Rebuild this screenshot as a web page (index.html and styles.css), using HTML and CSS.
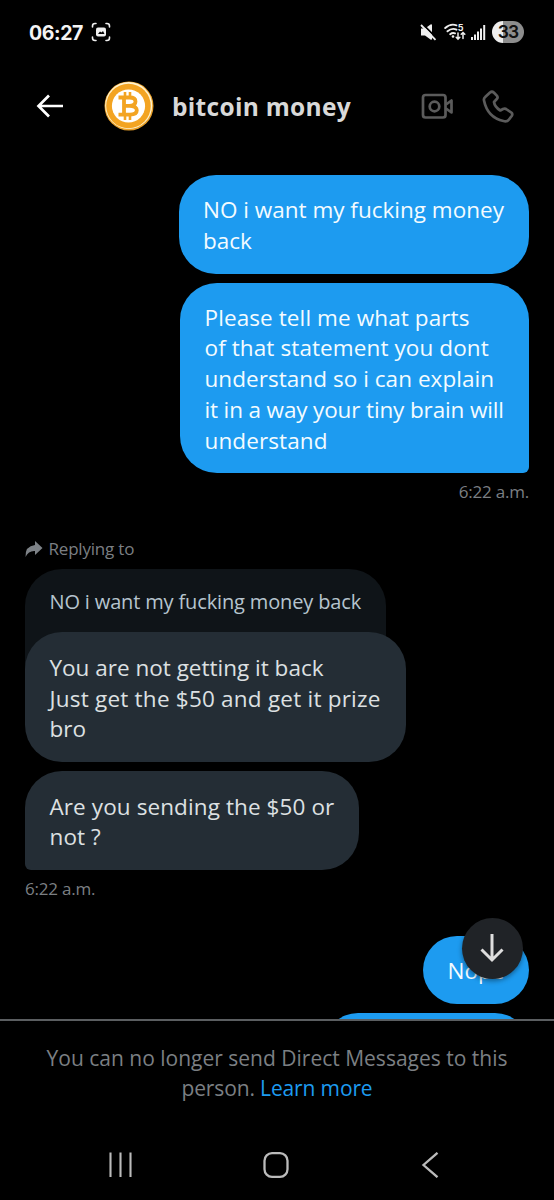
FILE: index.html
```html
<!DOCTYPE html>
<html lang="en">
<head>
<meta charset="utf-8">
<title>bitcoin money</title>
<link rel="stylesheet" href="styles.css">
</head>
<body>
<div class="phone">
  <div class="status">
    <span class="clock">06:27</span>
    <svg class="shot" width="20" height="20" viewBox="0 0 20 20" fill="none" stroke="#eee" stroke-width="1.6" stroke-linecap="round"><path d="M1.500 5V4Q1.500 1.500 4 1.500H5M15 1.500h1Q18.500 1.500 18.500 4V5M18.500 15v1Q18.500 18.500 16 18.500H15M5 18.500H4Q1.500 18.500 1.500 16V15"/><rect x="5" y="5.500" width="10" height="9" rx="2" fill="#eee" stroke="none"/><path d="M7 12l2-2.500 1.500 1 1.500-1.500 1.500 3z" fill="#000" stroke="none"/></svg>
    <svg class="mute" width="17" height="18" viewBox="0 0 17 18"><path d="M1 5.500H5L10.500 1.500Q12 .8 12 2.300V15.700Q12 17.200 10.500 16.500L5 12.500H1z" fill="#eee"/><path d="M2.500 .8L17 15.600" stroke="#000" stroke-width="1.800"/><path d="M1 2L15.500 16.800" stroke="#eee" stroke-width="1.800"/></svg>
    <svg class="wifi" width="23" height="18" viewBox="0 0 23 18" fill="none" stroke="#eee" stroke-width="1.900" stroke-linecap="round"><path d="M1.200 5Q6.500 .2 12.500 2.300M3.500 8.300Q8 4.500 12.500 6.700M6.200 11.200Q8.500 9.300 11 10.300"/><circle cx="9" cy="13.500" r="1.300" fill="#eee" stroke="none"/><path d="M14 10v6M12.200 14.300l1.800 1.800 1.800-1.800M19 15.500v-6M17.200 11.300l1.800-1.800 1.800 1.800" stroke-width="1.500"/><text x="13.700" y="7.800" class="wifi-gen">5</text></svg>
    <svg class="signal" width="15" height="17" viewBox="0 0 15 17" fill="#eee"><rect x="0" y="13" width="2" height="3"/><rect x="3" y="10.500" width="2" height="5.500"/><rect x="6" y="7.500" width="2" height="8.500"/><rect x="9" y="4.500" width="2" height="11.500"/><rect x="12.200" y="1" width="2" height="15"/></svg>
    <span class="battery">33</span>
  </div>

  <div class="header">
    <svg class="back" width="28" height="24" viewBox="0 0 28 24" fill="none" stroke="#fff" stroke-width="2.700"><path d="M27 12H2.500M13 1.500L2.500 12 13 22.500"/></svg>
    <svg class="avatar" width="50" height="50" viewBox="0 0 50 50"><circle cx="25" cy="25" r="24.500" fill="#e9a02a"/><circle cx="24.700" cy="24.500" r="23.500" fill="#fff3cf"/><circle cx="24.500" cy="25" r="22.300" fill="#f3a422"/><circle cx="24.500" cy="25" r="16.600" fill="#fff"/><g fill="none" stroke="#f3a422"><path d="M14.500 16.500H25.500Q31.500 16.500 31.500 20.500T25.500 24.800H20M25.500 24.800Q32.800 25 32.800 29.300T26 33.700H14.500M20 16V34" stroke-width="3.800"/><path d="M21 11v5M26 11v5M21 34v5M26 34v5" stroke-width="2.600"/></g></svg>
    <h1 class="name">bitcoin money</h1>
    <svg class="video" width="33" height="27" viewBox="0 0 33 27" fill="none" stroke="#5b5b5b" stroke-width="2.700" stroke-linejoin="round"><rect x="2" y="2" width="22.500" height="22.500" rx="2.500"/><circle cx="13.500" cy="13.500" r="4.800"/><path d="M25 11.500L30.500 7.500V19.500L25 15.500"/></svg>
    <svg class="call" width="32" height="33" viewBox="0 0 32 33" fill="none" stroke="#5b5b5b" stroke-width="2.700" stroke-linejoin="round"><path d="M8 2.500Q10 1 11.800 2.500L14.800 5.700Q16.300 7.500 14.800 9L12 12Q12.600 16.800 18.300 20.500L21 19Q23 18 24.800 19.500L29.300 22.500Q31 24 29.700 26L27 29.500Q25 32 21.500 31Q5.500 27.500 2 10.500Q1.500 8.500 3.200 7z"/></svg>
  </div>

  <div class="thread">
    <div class="bubble mine b1">NO i want my fucking money<br>back</div>
    <div class="bubble mine tail-right b2"><span class="loose">Please tell me what parts</span><br><span class="loose">of that statement you dont</span><br><span class="slight">understand so i can explain</span><br><span class="tight">it in a way your tiny brain will</span><br><span class="loose">understand</span></div>
    <div class="time time-right">6:22 a.m.</div>

    <div class="replying"><svg width="18" height="18" viewBox="0 0 18 18"><path d="M10 1L17.500 8 10 15V11Q3.500 10.500 .5 17Q0 6 10 5z" fill="#7d8287"/></svg><span>Replying to</span></div>
    <div class="quote">NO i want my fucking money back</div>
    <div class="bubble theirs b3">You are not getting it back<br><span class="looser">Just get the $50 and get it prize</span><br>bro</div>
    <div class="bubble theirs tail-left b4"><span class="loose">Are you sending the $50 or</span><br><span class="loose">not ?</span></div>
    <div class="time">6:22 a.m.</div>

    <div class="bubble mine b5">Nope</div>
    <div class="bubble mine b6"></div>
    <div class="jump"><svg width="24" height="29" viewBox="0 0 24 29" fill="none" stroke="#dedede" stroke-width="3"><path d="M12 0V26M1.500 15.500L12 26 22.500 15.500"/></svg></div>
  </div>

  <div class="notice">You can no longer send Direct Messages to this<br><span class="tight">person. <a class="link">Learn more</a></span></div>

  <div class="nav">
    <svg width="26" height="26" viewBox="0 0 26 26" stroke="#bbb" stroke-width="2.100"><path d="M2.500 .5V25M12.500 .5V25M22.500 .5V25"/></svg>
    <svg width="26" height="26" viewBox="0 0 26 26" fill="none" stroke="#bbb" stroke-width="2.300"><rect x="1.500" y="1.200" width="23" height="23.600" rx="7.500"/></svg>
    <svg width="26" height="26" viewBox="0 0 26 26" fill="none" stroke="#bbb" stroke-width="2.300"><path d="M20.500 .8L6.500 13 20.500 25.200"/></svg>
  </div>
</div>
</body>
</html>
```
FILE: styles.css
```css
* { box-sizing: border-box; }
body { margin: 0; background: #000; font-family: "Open Sans", "Noto Sans", sans-serif; }
.phone { width: 554px; height: 1200px; display: flex; flex-direction: column; background: #000; overflow: hidden; }

.status { height: 64px; display: flex; align-items: center; padding-left: 29px; flex: none; }
.clock { width: 54px; font: 700 19.500px/24px Inter, sans-serif; color: #f4f4f4; letter-spacing: -0.400px; padding-top: 1px; }
.shot { margin-left: 8px; }
.mute { margin-left: 309px; }
.wifi { margin-left: 7px; }
.wifi-gen { font: 700 9px Inter, sans-serif; fill: #eee; stroke: none; }
.signal { margin-left: 4px; }
.battery { width: 32px; height: 22px; margin-left: 6px; border-radius: 11px; background: linear-gradient(90deg, #eee 33%, #8d8d8d 33%); font: 600 17.500px/22px Inter, sans-serif; letter-spacing: -0.800px; color: #111; text-align: center; }

.header { height: 84px; display: flex; align-items: center; padding-left: 36px; flex: none; }
.avatar { margin-left: 40px; }
.name { margin: 0 0 0 18px; padding-top: 2px; width: 249px; font: 700 24.500px/32px "Open Sans", sans-serif; letter-spacing: 0.300px; color: #d9d9d9; white-space: nowrap; }
.call { margin-left: 28px; }

.thread { position: relative; height: 871px; padding: 27px 25px 0; display: flex; flex-direction: column; align-items: flex-start; flex: none; overflow: hidden; }
.bubble { flex: none; padding: 20px 24.500px 17px; border-radius: 37px; font-size: 22.500px; line-height: 30.750px; white-space: nowrap; }
.mine { align-self: flex-end; background: #1d9bf0; color: #f4fbff; }
.theirs { background: #242d35; color: #dde0e2; }
.tail-right { border-bottom-right-radius: 6px; }
.tail-left { border-bottom-left-radius: 6px; }
.loose { letter-spacing: 0.100px; }
.slight { letter-spacing: 0.050px; }
.looser { letter-spacing: 0.220px; }
.tight { letter-spacing: -0.140px; }
.b1 { width: 350.500px; }
.b2 { width: 349px; margin-top: 9px; }
.b3 { position: relative; width: 381px; margin-top: -37px; padding-top: 20.500px; }
.b4 { width: 334px; margin-top: 9px; padding-top: 20.500px; }
.b5 { width: 106px; margin-top: 34.500px; height: 68px; }
.b6 { width: 205px; height: 68px; margin-top: 9px; }
.time { height: 24px; margin-top: 7px; font-size: 17px; line-height: 24px; letter-spacing: -0.200px; color: #7b7f83; }
.time-right { align-self: flex-end; }
.replying { display: flex; align-items: center; gap: 6px; height: 24px; margin-top: 33px; margin-left: -0.500px; font-size: 17px; letter-spacing: -0.200px; color: #7b7f83; }
.quote { flex: none; width: 361px; height: 100px; margin-top: 9px; padding: 18px 24.500px; border-radius: 37px 37px 0 0; background: #0f1418; color: #b6c4ce; font-size: 20px; line-height: 29px; letter-spacing: -0.150px; white-space: nowrap; }
.jump { position: absolute; left: 461.500px; top: 769.500px; width: 61px; height: 61px; border-radius: 50%; background: #202327; display: flex; align-items: center; justify-content: center; box-shadow: 0 2px 5px rgba(0, 0, 0, .4); }

.notice { height: 111px; padding-top: 21.500px; border-top: 2px solid #5b5e61; text-align: center; font-size: 21px; line-height: 30.750px; color: #7b7f83; white-space: nowrap; flex: none; }
.link { color: #1d9bf0; }
.nav { display: flex; justify-content: space-between; align-items: center; height: 70px; padding: 0 111px 0 108px; }
```
